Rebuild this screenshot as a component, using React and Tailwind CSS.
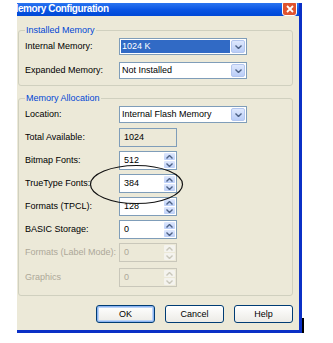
import React from 'react';

const font = { fontFamily: '"Liberation Sans", Arial, sans-serif' };

function Arrow({ up, disabled }) {
  return (
    <svg width="7" height="4" viewBox="0 0 7 4">
      <path
        d={up ? 'M0.5 3.5 L3.5 0.5 L6.5 3.5' : 'M0.5 0.5 L3.5 3.5 L6.5 0.5'}
        fill="none"
        stroke={disabled ? '#c9c7ba' : '#4d6185'}
        strokeWidth="1.4"
      />
    </svg>
  );
}

function Select({ value, selected }) {
  return (
    <div className="w-[128px] h-[17px] bg-white border border-[#7f9db9] flex items-stretch p-[1px]">
      <div className="flex-1 flex items-center">
        <span
          className={
            selected
              ? 'bg-[#316ac5] text-white w-full h-full flex items-center pl-[1px]'
              : 'text-black pl-[1px]'
          }
        >
          {value}
        </span>
      </div>
      <div className="w-[14px] ml-[1px] rounded-[2px] bg-gradient-to-b from-[#dfe8fd] to-[#b9cdf7] border border-[#b3c6ef] flex items-center justify-center">
        <Arrow />
      </div>
    </div>
  );
}

function Spin({ value, disabled, readOnly }) {
  return (
    <div
      className={
        'w-[58px] h-[19px] border flex items-stretch ' +
        (disabled
          ? 'border-[#c9c7ba] bg-[#ece9d8] text-[#aca899]'
          : readOnly
          ? 'border-[#7f9db9] bg-[#ece9d8] text-black'
          : 'border-[#7f9db9] bg-white text-black')
      }
    >
      <div className="flex-1 flex items-center pl-[4px]">{value}</div>
      {!readOnly && (
        <div className="w-[13px] flex flex-col p-[1px] gap-[1px]">
          <div
            className={
              'flex-1 rounded-[1px] flex items-center justify-center ' +
              (disabled ? 'bg-[#f4f3ee]' : 'bg-gradient-to-b from-[#dfe8fd] to-[#bccff8]')
            }
          >
            <Arrow up disabled={disabled} />
          </div>
          <div
            className={
              'flex-1 rounded-[1px] flex items-center justify-center ' +
              (disabled ? 'bg-[#f4f3ee]' : 'bg-gradient-to-b from-[#dfe8fd] to-[#bccff8]')
            }
          >
            <Arrow disabled={disabled} />
          </div>
        </div>
      )}
    </div>
  );
}

function Row({ label, disabled, children, className = '' }) {
  return (
    <div className={'flex items-center ' + className}>
      <span className={'w-[94px] ' + (disabled ? 'text-[#aca899]' : 'text-black')}>{label}</span>
      {children}
    </div>
  );
}

function Button({ children, primary }) {
  return (
    <button
      className={
        'w-[59px] h-[18px] rounded-[3px] border border-[#003c74] bg-gradient-to-b from-white to-[#ecebe6] text-black flex items-center justify-center ' +
        (primary ? 'shadow-[inset_0_0_0_1px_#8cb4f2,inset_0_0_0_2px_#bcd4f6]' : '')
      }
    >
      {children}
    </button>
  );
}

export default function App() {
  return (
    <div className="relative w-[333px] h-[343px] bg-white pt-[3px] pl-[17px] text-[9px] leading-[13px]" style={font}>
      <div className="w-[285px] h-[330px] bg-[#ece9d8] border-r-[3px] border-b-[3px] border-[#0b30c6] flex flex-col">
        <div className="h-[13px] bg-gradient-to-b from-[#2a74f0] via-[#0a55e4] to-[#0048d6] flex items-start justify-between overflow-hidden">
          <span className="ml-[-7px] text-white font-bold text-[10px] leading-[12px] tracking-[-0.4px]">Memory Configuration</span>
          <div className="mt-[-2px] mr-[2px] w-[15px] h-[15px] rounded-[3px] border border-white bg-[#e0532f] flex items-center justify-center">
            <svg width="8" height="8" viewBox="0 0 8 8">
              <path d="M1 1 L7 7 M7 1 L1 7" stroke="white" strokeWidth="1.8" />
            </svg>
          </div>
        </div>

        <div className="flex flex-col pl-[1px] pr-[6px]">
          <fieldset className="mt-[8px] border border-[#d0d0bf] rounded-[3px] px-[6px] pt-[1px] pb-[6px] flex flex-col gap-[7px]">
            <legend className="text-[#0046d5] px-[1px] leading-[13px]">Installed Memory</legend>
            <Row label="Internal Memory:">
              <Select value="1024 K" selected />
            </Row>
            <Row label="Expanded Memory:">
              <Select value="Not Installed" />
            </Row>
          </fieldset>

          <fieldset className="mt-[6px] border border-[#d0d0bf] rounded-[3px] px-[6px] pt-[1px] pb-[8px] flex flex-col gap-[4px]">
            <legend className="text-[#0046d5] px-[1px] leading-[13px]">Memory Allocation</legend>
            <Row label="Location:" className="mb-[1px]">
              <Select value="Internal Flash Memory" />
            </Row>
            <Row label="Total Available:">
              <Spin value="1024" readOnly />
            </Row>
            <Row label="Bitmap Fonts:">
              <Spin value="512" />
            </Row>
            <Row label="TrueType Fonts:">
              <Spin value="384" />
            </Row>
            <Row label="Formats (TPCL):">
              <Spin value="128" />
            </Row>
            <Row label="BASIC Storage:">
              <Spin value="0" />
            </Row>
            <Row label="Formats (Label Mode):" disabled>
              <Spin value="0" disabled />
            </Row>
            <Row label="Graphics" disabled className="mt-[2px]">
              <Spin value="0" disabled />
            </Row>
          </fieldset>

          <div className="mt-[9px] flex justify-end gap-[10px]">
            <Button primary>OK</Button>
            <Button>Cancel</Button>
            <Button>Help</Button>
          </div>
        </div>
      </div>

      <div className="absolute left-[302px] top-[318px] w-[2px] h-[15px] bg-black" />

      <svg className="absolute left-[89px] top-[164px]" width="95" height="41" viewBox="0 0 95 41">
        <ellipse cx="47.5" cy="20.5" rx="46" ry="19" fill="none" stroke="#111" strokeWidth="1.2" />
      </svg>
    </div>
  );
}
